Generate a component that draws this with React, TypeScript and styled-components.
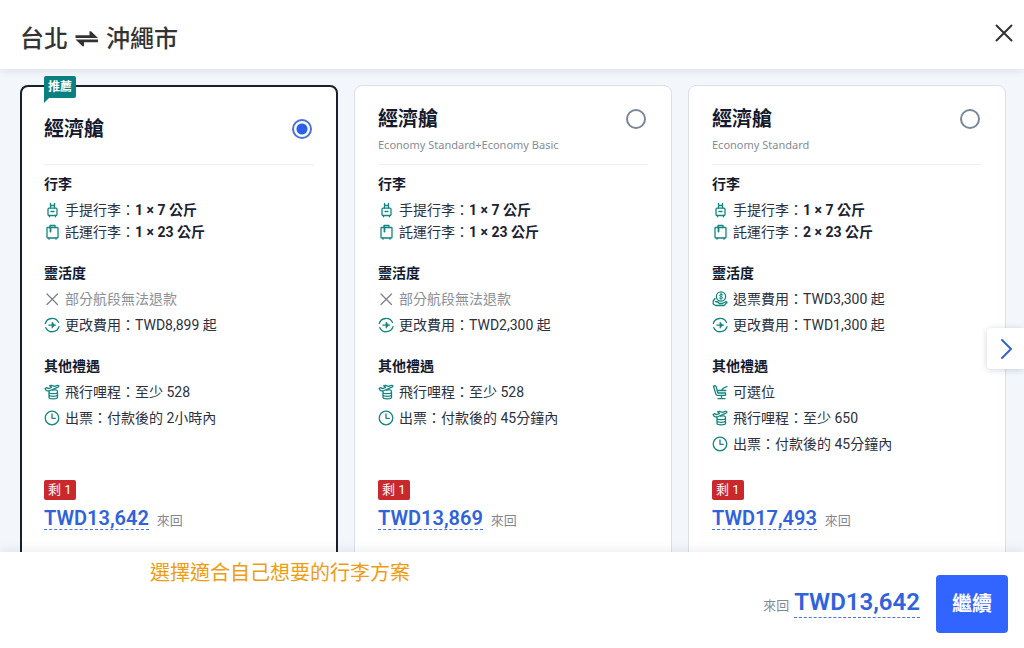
import React, { useState } from "react";
import styled, { createGlobalStyle } from "styled-components";

const GlobalStyle = createGlobalStyle`
  *, *::before, *::after { box-sizing: border-box; }
  body {
    margin: 0;
    background: #f3f6fb;
    color: #1b2233;
    font-family: Roboto, "Noto Sans CJK TC", sans-serif;
    font-size: 14px;
    line-height: 22px;
  }
  button { font-family: inherit; border: 0; cursor: pointer; }
`;

const Page = styled.div`
  display: flex;
  flex-direction: column;
  height: 100vh;
  overflow: hidden;
`;

const Header = styled.header`
  position: relative;
  z-index: 1;
  display: flex;
  flex: none;
  align-items: center;
  justify-content: space-between;
  padding: 17px 4px 12px 20px;
  background: #fff;
  box-shadow: 0 2px 8px rgba(20, 40, 80, 0.1);
`;

const Route = styled.h1`
  display: flex;
  align-items: center;
  gap: 7px;
  margin: 0;
  padding-top: 4px;
  color: #333;
  font-size: 24px;
  line-height: 36px;
  font-weight: 500;
`;

const CloseButton = styled.button`
  display: flex;
  align-self: flex-start;
  padding: 4px;
  background: none;
  color: #333;
`;

const Main = styled.main`
  position: relative;
  flex: 1;
  min-height: 0;
  overflow: hidden;
`;

const Fares = styled.div`
  display: grid;
  grid-template-columns: repeat(3, 1fr);
  gap: 16px;
  padding: 16px 18px 16px 20px;
`;

const Card = styled.article<{ $selected: boolean }>`
  position: relative;
  display: flex;
  flex-direction: column;
  padding: ${(p) => (p.$selected ? "0 22px 56px" : "1px 23px 57px")};
  border: ${(p) => (p.$selected ? "2px solid #17202b" : "1px solid #dae0e8")};
  border-radius: 8px;
  background: #fff;
`;

const Ribbon = styled.span`
  position: absolute;
  top: -11px;
  left: 22px;
  padding: 0 4px;
  border-radius: 2px 2px 2px 0;
  background: #0c7f80;
  color: #fff;
  font-size: 12px;
  line-height: 22px;
  font-weight: 700;

  &::after {
    content: "";
    position: absolute;
    top: 100%;
    left: 0;
    border-top: 5px solid #0c7f80;
    border-right: 5px solid transparent;
  }
`;

const CardHead = styled.div`
  display: flex;
  flex-direction: column;
  justify-content: center;
  min-height: 78px;
  padding-top: 7px;
  border-bottom: 1px solid #eef0f4;
`;

const CardTitle = styled.label`
  display: flex;
  align-items: center;
  justify-content: space-between;
  padding-right: 2px;
  color: #141a2e;
  font-size: 20px;
  line-height: 28px;
  font-weight: 700;
`;

const Radio = styled.input`
  appearance: none;
  width: 20px;
  height: 20px;
  margin: 0;
  border: 2px solid #7b8699;
  border-radius: 50%;

  &:checked {
    border-color: #4a72dc;
    background: radial-gradient(circle, #2b5fee 5px, #fff 6px);
  }
`;

const Subtitle = styled.p`
  margin: 4px 0 0;
  color: #858c98;
  font-family: "Noto Sans", sans-serif;
  font-size: 11px;
  line-height: 16px;
`;

const Sections = styled.div`
  display: flex;
  flex-direction: column;
  gap: 19px;
  padding: 8px 0 25px;
`;

const SectionTitle = styled.h2`
  margin: 0 0 4px;
  color: #141a2e;
  font-size: 14px;
  line-height: 22px;
  font-weight: 700;
`;

const List = styled.ul<{ $tight?: boolean }>`
  display: flex;
  flex-direction: column;
  gap: ${(p) => (p.$tight ? 0 : 4)}px;
  margin: 0;
  padding: 0;
  list-style: none;
`;

const Item = styled.li<{ $muted?: boolean }>`
  display: flex;
  align-items: center;
  gap: 5px;
  color: ${(p) => (p.$muted ? "#8a8f99" : "#2b3140")};

  svg { flex: none; color: ${(p) => (p.$muted ? "#7c828d" : "#15857f")}; }
  strong { font-weight: 700; color: #1b2233; }
`;

const Offer = styled.div`
  display: flex;
  flex-direction: column;
  align-items: flex-start;
  gap: 7px;
  margin-top: auto;
`;

const SeatsLeft = styled.span`
  padding: 0 4px;
  border-radius: 2px;
  background: #c9282d;
  color: #fff;
  font-size: 13px;
  line-height: 20px;
`;

const PriceRow = styled.div`
  display: flex;
  align-items: baseline;
  gap: 8px;
`;

const Price = styled.a<{ $large?: boolean }>`
  border-bottom: 1px dashed #4d73d6;
  color: #2f62dc;
  font-size: ${(p) => (p.$large ? 24 : 20)}px;
  line-height: ${(p) => (p.$large ? 30 : 22)}px;
  font-weight: 600;
  text-decoration: none;
`;

const TripType = styled.span`
  color: #7f8795;
  font-size: 13px;
`;

const NextButton = styled.button`
  position: absolute;
  top: 259px;
  right: 0;
  display: flex;
  padding: 10px 8px 9px 9px;
  border-radius: 4px 0 0 4px;
  background: #fff;
  color: #3563d0;
  box-shadow: 0 1px 6px rgba(20, 40, 80, 0.2);
`;

const Footer = styled.footer`
  position: relative;
  z-index: 1;
  display: flex;
  flex: none;
  justify-content: space-between;
  min-height: 96px;
  padding: 6px 16px 15px 150px;
  background: #fff;
  box-shadow: 0 -2px 10px rgba(20, 40, 80, 0.08);
`;

const Hint = styled.p`
  margin: 0;
  color: #ee9c12;
  font-size: 20px;
  line-height: 30px;
`;

const Checkout = styled.div`
  display: flex;
  align-items: center;
  align-self: flex-end;
  gap: 16px;
`;

const Total = styled(PriceRow)`
  gap: 5px;
  padding-bottom: 4px;
`;

const ContinueButton = styled.button`
  padding: 14px 16px;
  border-radius: 4px;
  background: #3264ff;
  color: #fff;
  font-size: 20px;
  line-height: 30px;
  font-weight: 700;
`;

type IconName = "carry" | "checked" | "cross" | "refund" | "change" | "miles" | "clock" | "seat";

const iconShapes: Record<IconName, React.ReactNode> = {
  carry: (
    <>
      <path d="M6.500 6V1.500M10.500 6V1.500M6.500 3.500h4" />
      <rect x="4" y="6.200" width="9" height="7.300" rx="1" />
      <path d="M7 9.500h3M5.500 13.500v1.300M11.500 13.500v1.300" />
    </>
  ),
  checked: (
    <>
      <rect x="3" y="3.500" width="11" height="10.500" rx="0.800" />
      <path d="M6 3.500V1.500h5v2M5 14v1.200M12 14v1.200" />
      <path d="M6.500 3.500v4" strokeWidth="1.800" />
    </>
  ),
  cross: <path d="M3 3l10.500 10.500M13.500 3L3 13.500" />,
  refund: (
    <>
      <circle cx="9" cy="5.500" r="4.600" />
      <path d="M10.700 3.900C9.500 2.900 7.500 3.300 7.600 4.400c.1 1.300 3 .8 3 2.200 0 1.200-2.100 1.400-3.200.4M9 2.300v6.400" strokeWidth="1" />
      <path d="M3 7.500L1.200 10v3l2.300 1.500h8.500l3-3c-.5-1-1.500-.9-2.300-.3L10.500 12.500H7.200M3.500 10.500c2 0 3 .2 3.700 2" />
    </>
  ),
  change: (
    <>
      <path d="M1.300 6.500A7 6.700 0 0 1 14.500 5.500M15 9.700A7 6.700 0 0 1 1.800 10.700" />
      <path d="M4.800 8.100h6.700M8.200 5.400v5.400M8.200 5.800l2.200 2.300-2.200 2.300" strokeWidth="1.200" />
    </>
  ),
  miles: (
    <>
      <path d="M1 4.500l1.700-.8 2 1L7.500 3.500 5.700 1.700 7.500 1.300l3 1.100 3-1c1.700-.3 1.900 1 .5 1.700L5 7 2.400 6.700Z" />
      <path d="M5 7.500v6c0 1.700 8.500 1.700 8.500 0v-6c0-1.700-3-2-5-1.300M5 8.500c1 1.600 7.500 1.600 8.500 0M5 11.200c1 1.500 7.500 1.500 8.500 0" />
    </>
  ),
  clock: (
    <>
      <circle cx="8" cy="8" r="6.800" />
      <path d="M8 4v4.300h3.300" />
    </>
  ),
  seat: (
    <>
      <path d="M1.500 2.300c1.200-1 2.500-.5 2.800.8l1.500 5.900h7.700v2.300H5.500c-1 0-1.500-.6-1.800-1.700Z" />
      <path d="M5.500 6.500h4L11.500 4l3.500-1.300M9.500 6.500h4.300M9.500 11.300v3.400M6 14.700h7" />
    </>
  ),
};

function Icon({ name }: { name: IconName }) {
  return (
    <svg width="16" height="16" viewBox="0 0 16 16" fill="none" stroke="currentColor" strokeWidth="1.3" strokeLinecap="round" strokeLinejoin="round" aria-hidden="true">
      {iconShapes[name]}
    </svg>
  );
}

type Line = { icon: IconName; text: string; strong?: string; muted?: boolean };
type Fare = { id: string; subtitle?: string; price: string; luggage: Line[]; flexibility: Line[]; extras: Line[] };

const luggage = (pieces: number): Line[] => [
  { icon: "carry", text: "手提行李：", strong: "1 × 7 公斤" },
  { icon: "checked", text: "託運行李：", strong: `${pieces} × 23 公斤` },
];

const fares: Fare[] = [
  {
    id: "recommended",
    price: "TWD13,642",
    luggage: luggage(1),
    flexibility: [
      { icon: "cross", text: "部分航段無法退款", muted: true },
      { icon: "change", text: "更改費用：TWD8,899 起" },
    ],
    extras: [
      { icon: "miles", text: "飛行哩程：至少 528" },
      { icon: "clock", text: "出票：付款後的 2小時內" },
    ],
  },
  {
    id: "standard-basic",
    subtitle: "Economy Standard+Economy Basic",
    price: "TWD13,869",
    luggage: luggage(1),
    flexibility: [
      { icon: "cross", text: "部分航段無法退款", muted: true },
      { icon: "change", text: "更改費用：TWD2,300 起" },
    ],
    extras: [
      { icon: "miles", text: "飛行哩程：至少 528" },
      { icon: "clock", text: "出票：付款後的 45分鐘內" },
    ],
  },
  {
    id: "standard",
    subtitle: "Economy Standard",
    price: "TWD17,493",
    luggage: luggage(2),
    flexibility: [
      { icon: "refund", text: "退票費用：TWD3,300 起" },
      { icon: "change", text: "更改費用：TWD1,300 起" },
    ],
    extras: [
      { icon: "seat", text: "可選位" },
      { icon: "miles", text: "飛行哩程：至少 650" },
      { icon: "clock", text: "出票：付款後的 45分鐘內" },
    ],
  },
];

function Section({ title, lines, tight }: { title: string; lines: Line[]; tight?: boolean }) {
  return (
    <section>
      <SectionTitle>{title}</SectionTitle>
      <List $tight={tight}>
        {lines.map((line) => (
          <Item key={line.text} $muted={line.muted}>
            <Icon name={line.icon} />
            <span>
              {line.text}
              {line.strong && <strong>{line.strong}</strong>}
            </span>
          </Item>
        ))}
      </List>
    </section>
  );
}

export default function App() {
  const [selectedId, setSelectedId] = useState("recommended");
  const selected = fares.find((fare) => fare.id === selectedId) ?? fares[0];

  return (
    <Page>
      <GlobalStyle />
      <Header>
        <Route>
          台北
          <svg width="24" height="16" viewBox="0 0 24 16" fill="#333" role="img" aria-label="來回">
            <path d="M0.500 4.300H14.500V0.300H16L23 7H0.500ZM23 11.200H9V15.200H7.500L0.500 8.500H23Z" />
          </svg>
          沖繩市
        </Route>
        <CloseButton type="button" aria-label="關閉">
          <svg width="24" height="24" viewBox="0 0 24 24" fill="none" stroke="currentColor" strokeWidth="2" strokeLinecap="round">
            <path d="M4.500 4.500l15 15M19.500 4.500l-15 15" />
          </svg>
        </CloseButton>
      </Header>

      <Main>
        <Fares>
          {fares.map((fare) => (
            <Card key={fare.id} $selected={fare.id === selectedId}>
              {fare.id === "recommended" && <Ribbon>推薦</Ribbon>}
              <CardHead>
                <CardTitle>
                  經濟艙
                  <Radio type="radio" name="fare" checked={fare.id === selectedId} onChange={() => setSelectedId(fare.id)} />
                </CardTitle>
                {fare.subtitle && <Subtitle>{fare.subtitle}</Subtitle>}
              </CardHead>
              <Sections>
                <Section title="行李" lines={fare.luggage} tight />
                <Section title="靈活度" lines={fare.flexibility} />
                <Section title="其他禮遇" lines={fare.extras} />
              </Sections>
              <Offer>
                <SeatsLeft>剩 1</SeatsLeft>
                <PriceRow>
                  <Price href="#price">{fare.price}</Price>
                  <TripType>來回</TripType>
                </PriceRow>
              </Offer>
            </Card>
          ))}
        </Fares>
        <NextButton type="button" aria-label="下一個">
          <svg width="20" height="22" viewBox="0 0 20 22" fill="none" stroke="currentColor" strokeWidth="2" strokeLinecap="round" strokeLinejoin="round">
            <path d="M6 2l9 9-9 9" />
          </svg>
        </NextButton>
      </Main>

      <Footer>
        <Hint>選擇適合自己想要的行李方案</Hint>
        <Checkout>
          <Total>
            <TripType>來回</TripType>
            <Price $large href="#price">{selected.price}</Price>
          </Total>
          <ContinueButton type="button">繼續</ContinueButton>
        </Checkout>
      </Footer>
    </Page>
  );
}
